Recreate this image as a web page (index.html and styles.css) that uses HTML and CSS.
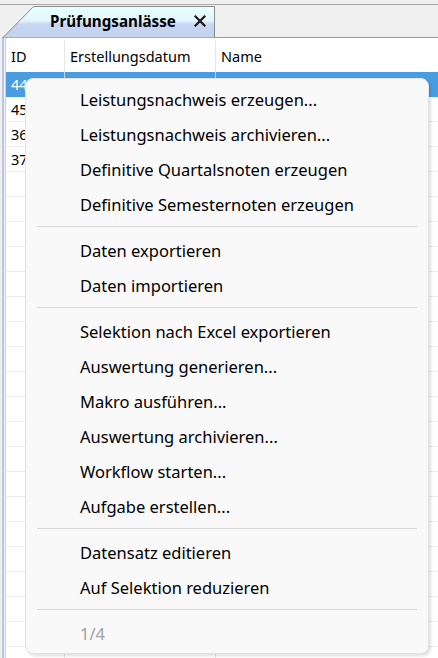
FILE: index.html
```html
<!DOCTYPE html>
<html lang="de">
<head>
  <meta charset="UTF-8" />
  <meta name="viewport" content="width=device-width, initial-scale=1.0" />
  <title>Prüfungsanlässe</title>
  <link rel="stylesheet" href="styles.css">
</head>
<body>

  <!-- Tab strip with the single document tab -->
  <div class="tabstrip">
    <div class="tab">
      <svg class="tab-shape" width="213" height="32" viewBox="0 0 213 32">
        <defs>
          <linearGradient id="tabFill" x1="0" y1="0" x2="0" y2="1">
            <stop offset="0" stop-color="#eaffff" />
            <stop offset="0.45" stop-color="#e2f6fc" />
            <stop offset="0.56" stop-color="#c7d6f3" />
            <stop offset="1" stop-color="#c3d2f0" />
          </linearGradient>
        </defs>
        <polygon points="0.5,32 31.5,0.5 212.5,0.5 212.5,32" fill="url(#tabFill)" stroke="#8a8a8a" stroke-width="1" />
      </svg>
      <span class="tab-title">Prüfungsanlässe</span>
      <svg class="tab-close" width="12" height="12" viewBox="0 0 12 12">
        <path d="M1.5 1.5 L10.5 10.5 M10.5 1.5 L1.5 10.5" stroke="#1a1a1a" stroke-width="2.2" stroke-linecap="square" />
      </svg>
    </div>
  </div>

  <div class="panel">
    <div class="grid">
      <div class="row head">
        <span>ID</span><span>Erstellungsdatum</span><span>Name</span>
      </div>
      <div class="row selected"><span>44</span><span></span><span></span></div>
      <div class="row"><span>45</span><span></span><span></span></div>
      <div class="row"><span>36</span><span></span><span></span></div>
      <div class="row"><span>37</span><span></span><span></span></div>
      <div class="row"><span></span><span></span><span></span></div>
      <div class="row"><span></span><span></span><span></span></div>
      <div class="row"><span></span><span></span><span></span></div>
      <div class="row"><span></span><span></span><span></span></div>
      <div class="row"><span></span><span></span><span></span></div>
      <div class="row"><span></span><span></span><span></span></div>
      <div class="row"><span></span><span></span><span></span></div>
      <div class="row"><span></span><span></span><span></span></div>
      <div class="row"><span></span><span></span><span></span></div>
      <div class="row"><span></span><span></span><span></span></div>
      <div class="row"><span></span><span></span><span></span></div>
      <div class="row"><span></span><span></span><span></span></div>
      <div class="row"><span></span><span></span><span></span></div>
      <div class="row"><span></span><span></span><span></span></div>
      <div class="row"><span></span><span></span><span></span></div>
      <div class="row"><span></span><span></span><span></span></div>
      <div class="row"><span></span><span></span><span></span></div>
      <div class="row"><span></span><span></span><span></span></div>
      <div class="row"><span></span><span></span><span></span></div>
      <div class="row"><span></span><span></span><span></span></div>
    </div>
  </div>

  <!-- Context menu for the selected record -->
  <div class="context-menu">
    <div class="item">Leistungsnachweis erzeugen...</div>
    <div class="item">Leistungsnachweis archivieren...</div>
    <div class="item">Definitive Quartalsnoten erzeugen</div>
    <div class="item">Definitive Semesternoten erzeugen</div>
    <div class="separator"></div>
    <div class="item">Daten exportieren</div>
    <div class="item">Daten importieren</div>
    <div class="separator"></div>
    <div class="item">Selektion nach Excel exportieren</div>
    <div class="item">Auswertung generieren...</div>
    <div class="item">Makro ausführen...</div>
    <div class="item">Auswertung archivieren...</div>
    <div class="item">Workflow starten...</div>
    <div class="item">Aufgabe erstellen...</div>
    <div class="separator"></div>
    <div class="item">Datensatz editieren</div>
    <div class="item">Auf Selektion reduzieren</div>
    <div class="separator"></div>
    <div class="item disabled">1/4</div>
  </div>

</body>
</html>
```

FILE: styles.css
```css
html, body {
  height: 100%;
  overflow: hidden;
}
body {
  margin: 0;
  background: #f0f0f0;
  font-family: "Noto Sans", "Open Sans", sans-serif;
  color: #000;
}

/* tab strip */
.tabstrip {
  margin-top: 4px;
  border-top: 1px solid #a8a8a8;
  padding: 1px 0 0 2px;
  height: 31px;
}
.tab {
  position: relative;
  width: 213px;
  height: 32px;
  display: flex;
  align-items: center;
  box-sizing: border-box;
  padding: 0 0 2px 48px;
}
.tab-shape {
  position: absolute;
  left: 0;
  top: 0;
}
.tab-title {
  position: relative;
  font-weight: bold;
  font-size: 15.2px;
}
.tab-close {
  position: relative;
  margin-left: 18px;
}

/* data grid */
.panel {
  margin-left: 2px;
  border-left: 2px solid #b8c4ec;
}
.grid {
  background: #fff;
  border-top: 1px solid #9a9a9a;
  border-left: 1px solid #d4d4d4;
  padding-top: 2px;
  margin-left: 1px;
}
.row {
  display: grid;
  grid-template-columns: 58px 151px 1fr;
  height: 25px;
  box-sizing: border-box;
  border-bottom: 1px solid #ececec;
  font-size: 14.5px;
}
.row span {
  display: flex;
  align-items: center;
  padding-left: 5px;
  white-space: nowrap;
}
.row span + span {
  border-left: 1px solid #e6e6e6;
}
.row.head {
  height: 32px;
  border-bottom: none;
}
.row.selected {
  background: #4a9de0;
  color: #fff;
  border-bottom-color: #4a9de0;
}
.row.selected span + span {
  border-left-color: #b9d8f3;
}

/* context menu */
.context-menu {
  position: absolute;
  left: 25px;
  top: 78px;
  width: 404px;
  box-sizing: border-box;
  padding: 3px 0 2px;
  background: #f9f9f9;
  border: 1px solid #e2e2e2;
  border-radius: 8px;
  box-shadow: 2px 2px 3px rgba(0, 0, 0, 0.12);
}
.item {
  height: 35px;
  line-height: 35px;
  padding-left: 54px;
  font-size: 16.5px;
  white-space: nowrap;
}
.item.disabled {
  color: #a0a0a0;
}
.separator {
  height: 1px;
  margin: 4px 11px 6px;
  background: #d9d9d9;
}
```
